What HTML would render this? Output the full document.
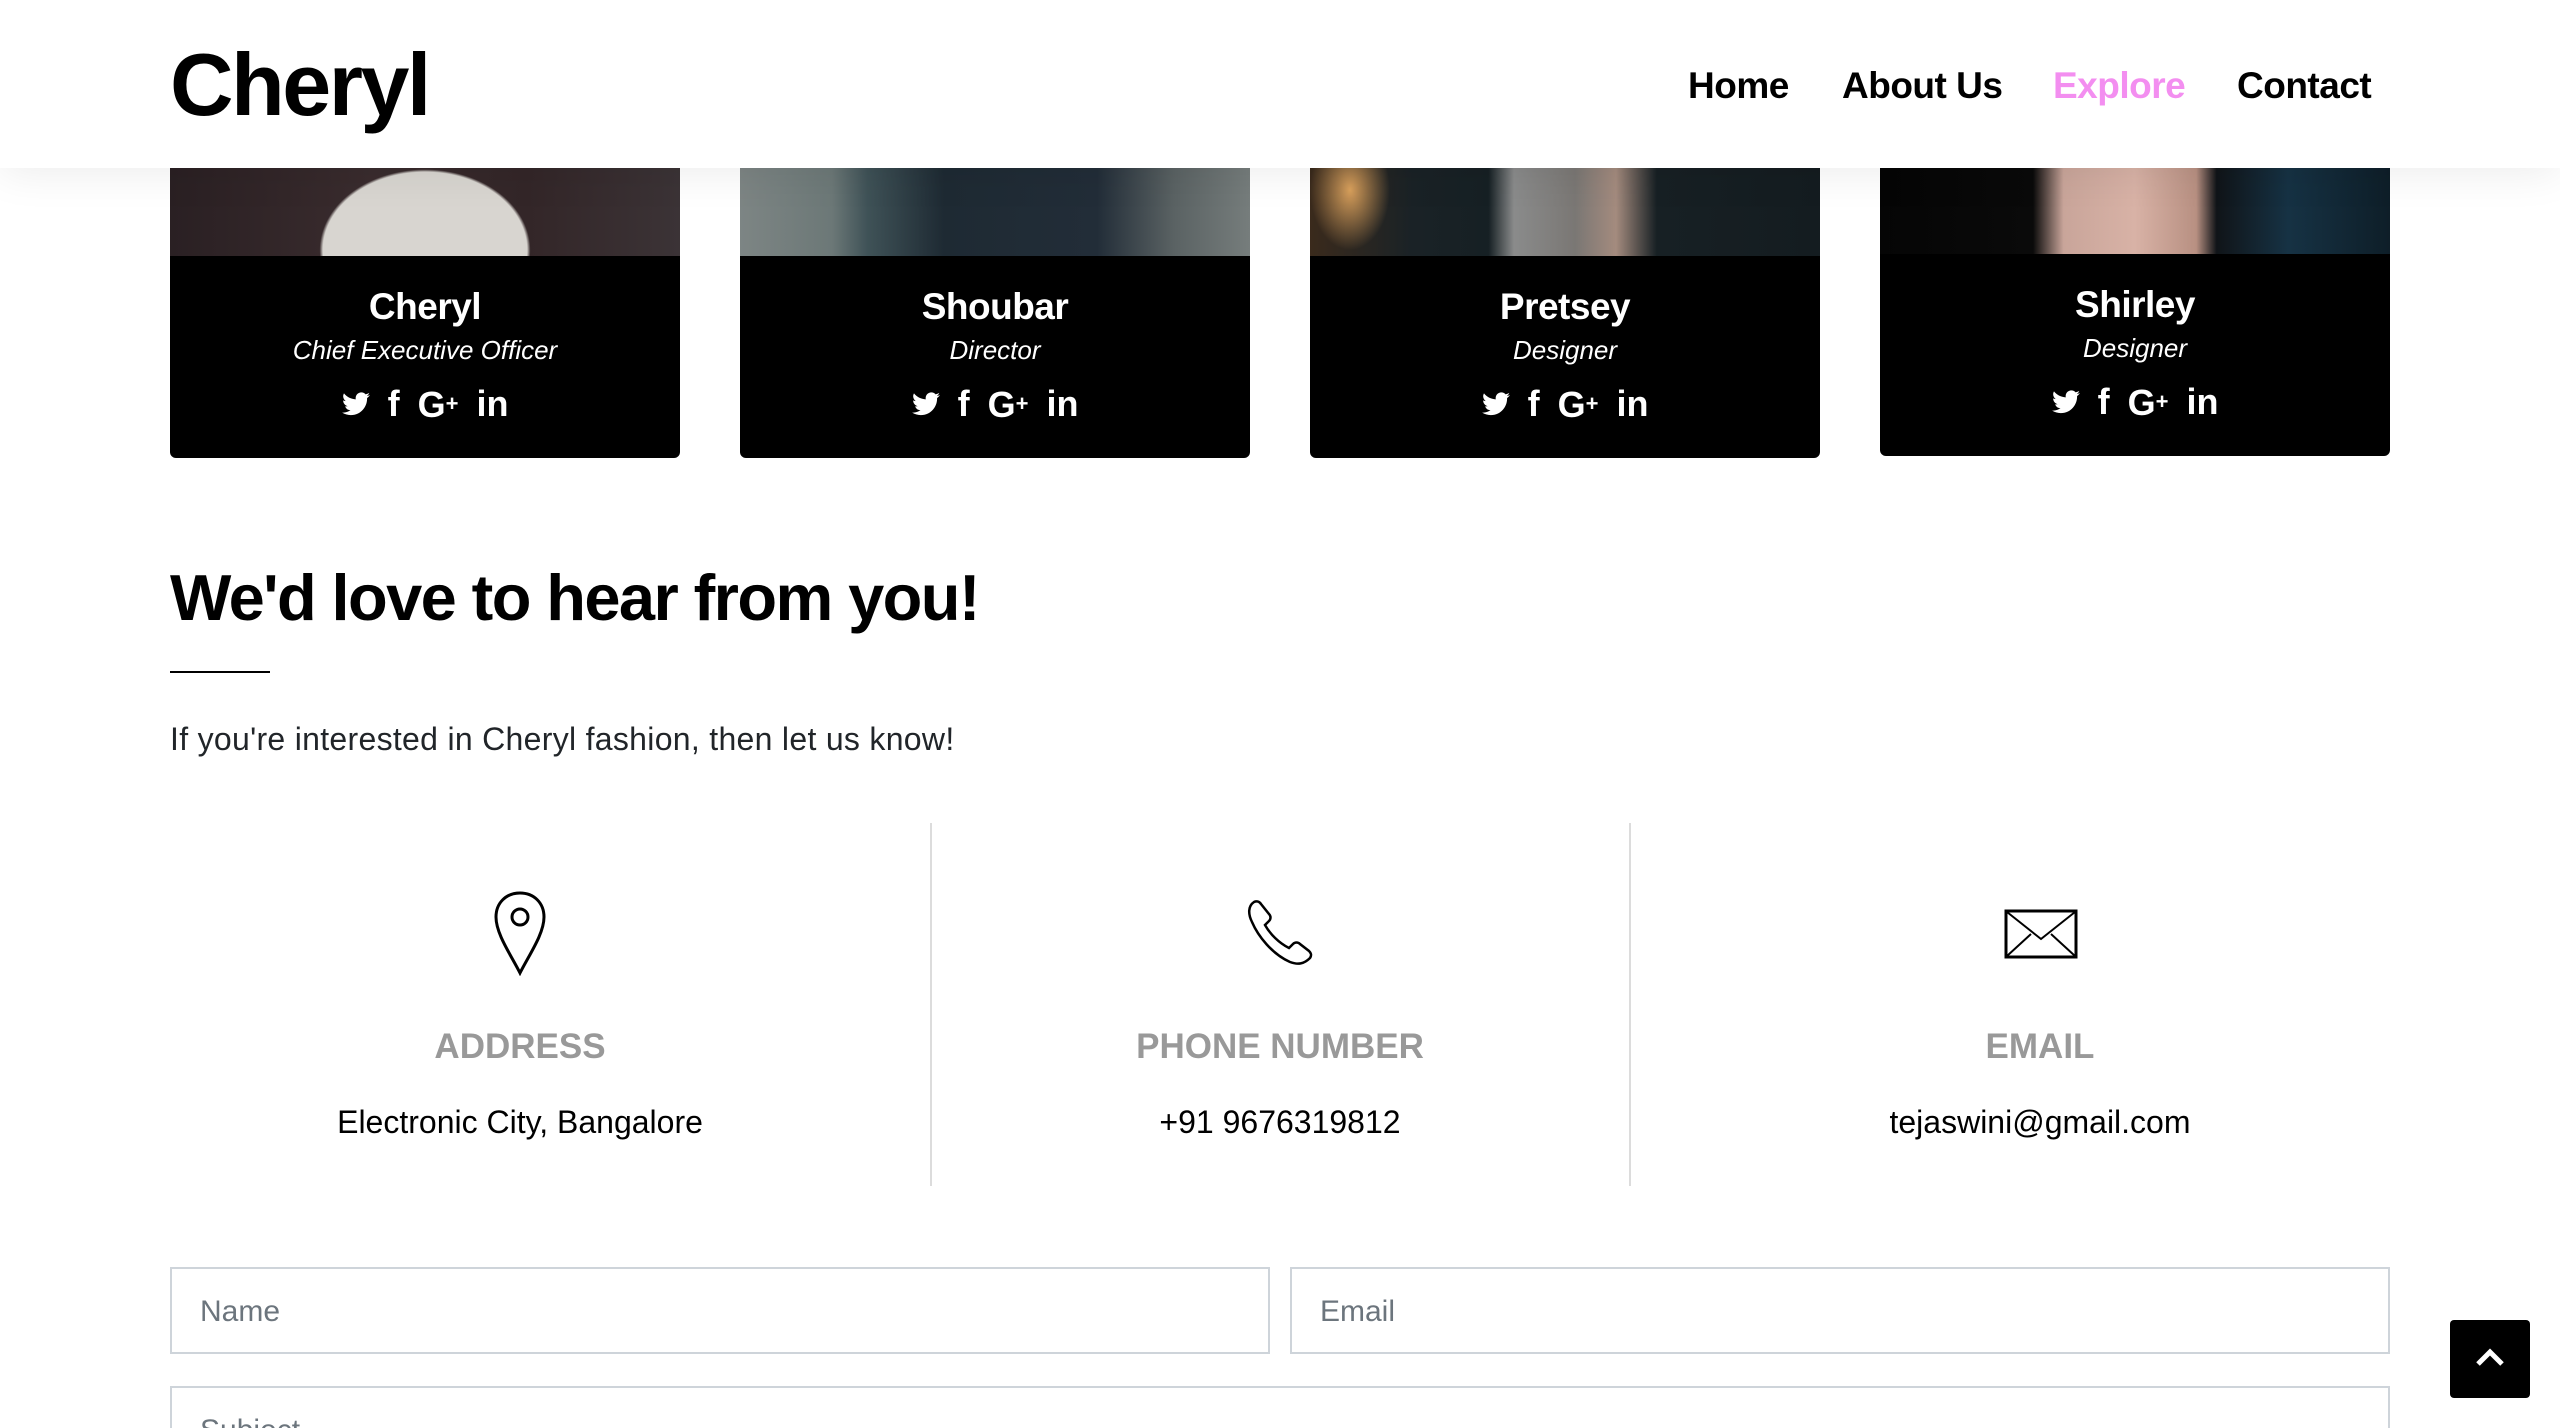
<!DOCTYPE html>
<html style="width:2560px;height:1428px;overflow:hidden"><head><meta charset="utf-8"><style>
*{margin:0;padding:0;box-sizing:border-box}
body{width:2560px;height:1428px;overflow:hidden;background:#fff;font-family:"Liberation Sans",Arial,sans-serif;position:relative;color:#000}
.abs{position:absolute}
header{position:absolute;left:0;top:0;width:2560px;height:168px;background:#fff;z-index:5;box-shadow:0 4px 40px rgba(0,0,0,.08)}
.logo{left:170px;top:32px;font-size:88px;font-weight:bold;letter-spacing:-2.5px;line-height:106px}
.nav{top:62px;font-size:37px;font-weight:bold;line-height:48px;letter-spacing:-0.5px}
.card{position:absolute;top:100px;width:510px;height:358px;background:#000;border-radius:0 0 6px 6px;overflow:hidden;color:#fff;text-align:center}
.card .img{position:absolute;left:0;top:0;width:510px;height:156px}
.card .nm{position:absolute;left:0;width:510px;top:185px;font-size:37px;font-weight:bold;line-height:44px;letter-spacing:-0.5px}
.card .rl{position:absolute;left:0;width:510px;top:234px;font-size:26px;font-style:italic;line-height:32px}
.card .ic{position:absolute;left:0;width:510px;top:284px;height:40px;font-size:36px;font-weight:bold;line-height:40px;display:flex;justify-content:center;align-items:center;gap:18px}
h2{position:absolute;left:170px;top:562px;font-size:65px;font-weight:bold;letter-spacing:-1.6px;line-height:72px}
.lbl{position:absolute;top:1026px;font-size:35px;font-weight:bold;color:#999;line-height:42px}
.val{position:absolute;top:1102px;font-size:32px;color:#000;line-height:40px}
.inp{position:absolute;border:2px solid #ced4da;background:#fff;font-size:30px;color:#6c757d;padding-left:28px;line-height:83px}
</style></head><body>
<header>
<div class="abs logo">Cheryl</div>
<div class="abs nav" style="left:1688px">Home</div>
<div class="abs nav" style="left:1842px">About Us</div>
<div class="abs nav" style="left:2053px;color:#f38ef0">Explore</div>
<div class="abs nav" style="left:2237px">Contact</div>
</header>

<div class="card" style="left:170px"><div class="img" style="background:radial-gradient(ellipse 170px 130px at 255px 150px,#d8d5d0 60%,transparent 62%),linear-gradient(90deg,#2a2023,#3a2c2e 40%,#332628 70%,#3b3336)"></div><div class="nm">Cheryl</div><div class="rl">Chief Executive Officer</div><div class="ic"><svg width="28" height="24" viewBox="0 0 24 20"><path fill="#fff" d="M24 2.4c-.9.4-1.8.6-2.8.8 1-.6 1.8-1.6 2.2-2.7-1 .6-2 1-3.1 1.2C19.3.7 18 0 16.6 0c-2.7 0-4.9 2.2-4.9 4.9 0 .4 0 .8.1 1.1C7.7 5.8 4.1 3.9 1.7.9c-.4.7-.7 1.6-.7 2.5 0 1.7.9 3.2 2.2 4.1-.8 0-1.6-.2-2.2-.6v.1c0 2.4 1.7 4.4 3.9 4.8-.4.1-.8.2-1.3.2-.3 0-.6 0-.9-.1.6 2 2.4 3.4 4.6 3.4-1.7 1.3-3.8 2.1-6.1 2.1-.4 0-.8 0-1.2-.1 2.2 1.4 4.8 2.2 7.5 2.2 9.1 0 14-7.5 14-14v-.6c1-.7 1.8-1.6 2.5-2.5z"/></svg><span>f</span><span>G<small style="font-size:22px;vertical-align:6px">+</small></span><span>in</span></div></div>

<div class="card" style="left:740px"><div class="img" style="background:linear-gradient(90deg,#7d8584 0%,#6c7877 18%,#3f5257 25%,#1e2a33 40%,#222d38 70%,#5a6263 85%,#767d7c 100%)"></div><div class="nm">Shoubar</div><div class="rl">Director</div><div class="ic"><svg width="28" height="24" viewBox="0 0 24 20"><path fill="#fff" d="M24 2.4c-.9.4-1.8.6-2.8.8 1-.6 1.8-1.6 2.2-2.7-1 .6-2 1-3.1 1.2C19.3.7 18 0 16.6 0c-2.7 0-4.9 2.2-4.9 4.9 0 .4 0 .8.1 1.1C7.7 5.8 4.1 3.9 1.7.9c-.4.7-.7 1.6-.7 2.5 0 1.7.9 3.2 2.2 4.1-.8 0-1.6-.2-2.2-.6v.1c0 2.4 1.7 4.4 3.9 4.8-.4.1-.8.2-1.3.2-.3 0-.6 0-.9-.1.6 2 2.4 3.4 4.6 3.4-1.7 1.3-3.8 2.1-6.1 2.1-.4 0-.8 0-1.2-.1 2.2 1.4 4.8 2.2 7.5 2.2 9.1 0 14-7.5 14-14v-.6c1-.7 1.8-1.6 2.5-2.5z"/></svg><span>f</span><span>G<small style="font-size:22px;vertical-align:6px">+</small></span><span>in</span></div></div>

<div class="card" style="left:1310px"><div class="img" style="background:radial-gradient(ellipse 40px 60px at 40px 90px,#d9a05c,transparent),linear-gradient(90deg,#3a2a1c 0%,#1a2226 20%,#162024 35%,#8a8b8b 40%,#7a7774 52%,#a48b7e 60%,#172024 68%,#141c20 100%)"></div><div class="nm">Pretsey</div><div class="rl">Designer</div><div class="ic"><svg width="28" height="24" viewBox="0 0 24 20"><path fill="#fff" d="M24 2.4c-.9.4-1.8.6-2.8.8 1-.6 1.8-1.6 2.2-2.7-1 .6-2 1-3.1 1.2C19.3.7 18 0 16.6 0c-2.7 0-4.9 2.2-4.9 4.9 0 .4 0 .8.1 1.1C7.7 5.8 4.1 3.9 1.7.9c-.4.7-.7 1.6-.7 2.5 0 1.7.9 3.2 2.2 4.1-.8 0-1.6-.2-2.2-.6v.1c0 2.4 1.7 4.4 3.9 4.8-.4.1-.8.2-1.3.2-.3 0-.6 0-.9-.1.6 2 2.4 3.4 4.6 3.4-1.7 1.3-3.8 2.1-6.1 2.1-.4 0-.8 0-1.2-.1 2.2 1.4 4.8 2.2 7.5 2.2 9.1 0 14-7.5 14-14v-.6c1-.7 1.8-1.6 2.5-2.5z"/></svg><span>f</span><span>G<small style="font-size:22px;vertical-align:6px">+</small></span><span>in</span></div></div>

<div class="card" style="left:1880px;height:356px"><div class="img" style="height:154px;background:linear-gradient(90deg,#050505 0%,#0a0a0a 30%,#c9a59a 36%,#d8b2a6 50%,#b89082 62%,#101418 66%,#163244 80%,#0e1e28 100%)"></div><div class="nm" style="top:183px">Shirley</div><div class="rl" style="top:232px">Designer</div><div class="ic" style="top:282px"><svg width="28" height="24" viewBox="0 0 24 20"><path fill="#fff" d="M24 2.4c-.9.4-1.8.6-2.8.8 1-.6 1.8-1.6 2.2-2.7-1 .6-2 1-3.1 1.2C19.3.7 18 0 16.6 0c-2.7 0-4.9 2.2-4.9 4.9 0 .4 0 .8.1 1.1C7.7 5.8 4.1 3.9 1.7.9c-.4.7-.7 1.6-.7 2.5 0 1.7.9 3.2 2.2 4.1-.8 0-1.6-.2-2.2-.6v.1c0 2.4 1.7 4.4 3.9 4.8-.4.1-.8.2-1.3.2-.3 0-.6 0-.9-.1.6 2 2.4 3.4 4.6 3.4-1.7 1.3-3.8 2.1-6.1 2.1-.4 0-.8 0-1.2-.1 2.2 1.4 4.8 2.2 7.5 2.2 9.1 0 14-7.5 14-14v-.6c1-.7 1.8-1.6 2.5-2.5z"/></svg><span>f</span><span>G<small style="font-size:22px;vertical-align:6px">+</small></span><span>in</span></div></div>

<h2>We'd love to hear from you!</h2>
<div class="abs" style="left:170px;top:671px;width:100px;height:2px;background:#000"></div>
<div class="abs" style="left:170px;top:719px;font-size:32px;line-height:40px;color:#212529;letter-spacing:0.3px">If you're interested in Cheryl fashion, then let us know!</div>

<div class="abs" style="left:930px;top:823px;width:2px;height:363px;background:#dcdcdc"></div>
<div class="abs" style="left:1629px;top:823px;width:2px;height:363px;background:#dcdcdc"></div>

<svg class="abs" style="left:492px;top:890px" width="56" height="86" viewBox="0 0 56 86"><path d="M28 3C14 3 4 13 4 27c0 17 15 38 24 56 9-18 24-39 24-56C52 13 42 3 28 3z" fill="none" stroke="#000" stroke-width="3"/><circle cx="28" cy="27" r="8" fill="none" stroke="#000" stroke-width="3"/></svg>
<svg class="abs" style="left:1246px;top:898px" width="70" height="70" viewBox="0 0 70 70"><path d="M8 4c-6 4-6 12-2 20 6 14 20 32 38 40 8 3 14 2 20-4 2-3 1-5-1-7l-9-7c-2-2-5-2-7 0l-4 4C33 45 24 36 19 27l4-4c2-2 2-5 0-7L15 6c-2-3-5-3-7-2z" fill="none" stroke="#000" stroke-width="2.5"/></svg>
<svg class="abs" style="left:2004px;top:909px" width="74" height="50" viewBox="0 0 74 50"><rect x="2" y="2" width="70" height="46" fill="none" stroke="#000" stroke-width="3"/><path d="M3 3l34 27L71 3M3 47l24-22M71 47L47 25" fill="none" stroke="#000" stroke-width="2"/></svg>

<div class="lbl" style="left:170px;width:700px;text-align:center">ADDRESS</div>
<div class="val" style="left:170px;width:700px;text-align:center">Electronic City, Bangalore</div>
<div class="lbl" style="left:930px;width:700px;text-align:center">PHONE NUMBER</div>
<div class="val" style="left:930px;width:700px;text-align:center">+91 9676319812</div>
<div class="lbl" style="left:1690px;width:700px;text-align:center">EMAIL</div>
<div class="val" style="left:1690px;width:700px;text-align:center">tejaswini@gmail.com</div>

<div class="inp" style="left:170px;top:1267px;width:1100px;height:87px;line-height:86px">Name</div>
<div class="inp" style="left:1290px;top:1267px;width:1100px;height:87px;line-height:86px">Email</div>
<div class="inp" style="left:170px;top:1386px;width:2220px;height:87px;line-height:86px">Subject</div>

<div class="abs" style="left:2450px;top:1320px;width:80px;height:78px;background:#000;border-radius:4px"><svg width="80" height="78" viewBox="0 0 80 78"><path d="M28 44l12-12 12 12" fill="none" stroke="#fff" stroke-width="5"/></svg></div>
</body></html>
